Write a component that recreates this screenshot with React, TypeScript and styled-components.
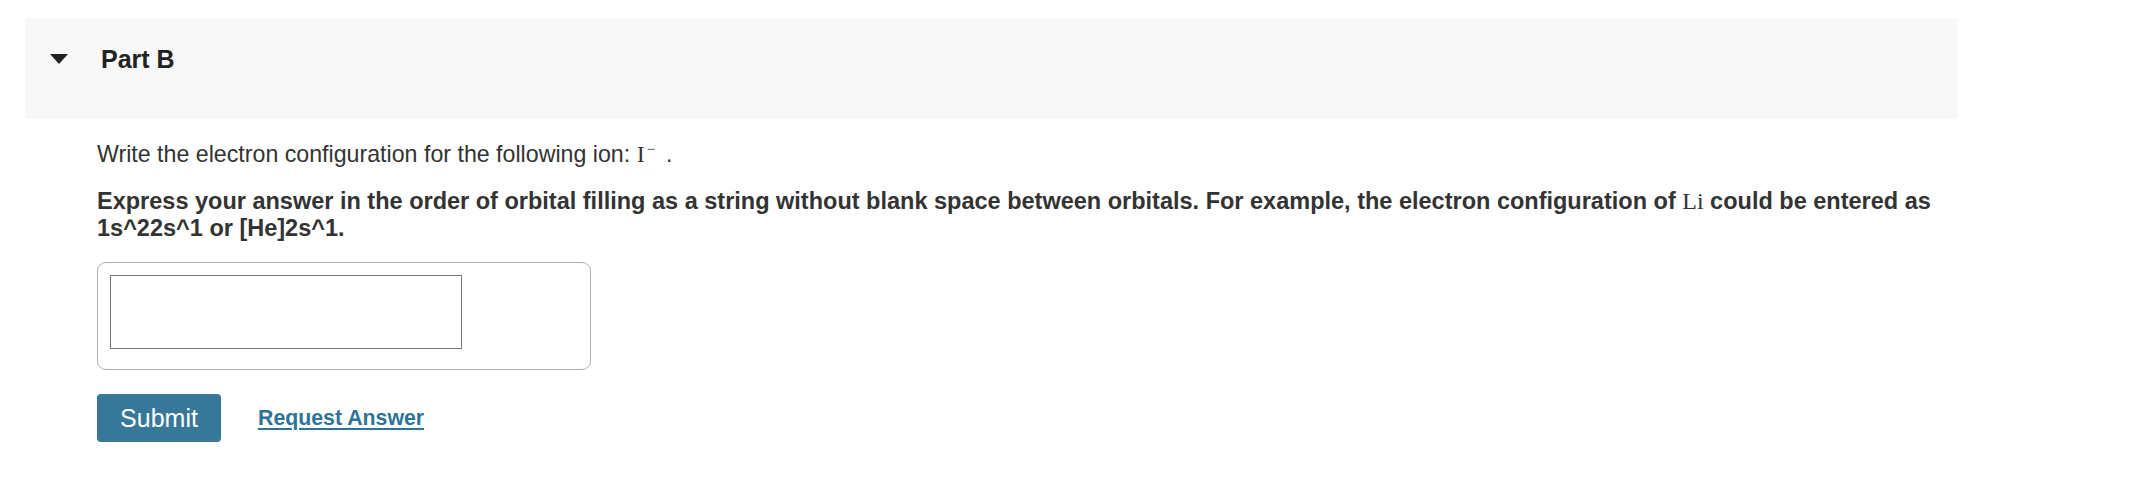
import React from "react";
import styled, { createGlobalStyle } from "styled-components";

const GlobalStyle = createGlobalStyle`
  html, body {
    margin: 0;
    padding: 0;
    background: #ffffff;
  }
  body {
    font-family: "Liberation Sans", Arial, Helvetica, sans-serif;
    color: #333333;
  }
`;

const Page = styled.div`
  padding: 18px 0 0 25px;
  width: 1933px;
`;

const PartHeader = styled.div`
  box-sizing: border-box;
  height: 101px;
  padding: 26px 25px 0;
  background: #f8f8f8;
`;

const HeaderRow = styled.div`
  display: flex;
  align-items: center;
  gap: 33px;
`;

const Caret = styled.span`
  display: block;
  width: 0;
  height: 0;
  border-left: 9.5px solid transparent;
  border-right: 9.5px solid transparent;
  border-top: 10px solid #222222;
`;

const PartTitle = styled.h2`
  margin: 0;
  font-size: 25px;
  line-height: 30px;
  font-weight: 700;
  color: #222222;
`;

const Body = styled.div`
  padding: 22px 0 0 72px;
  display: flex;
  flex-direction: column;
  align-items: flex-start;
`;

const Paragraph = styled.p<{ $bold?: boolean }>`
  margin: 0 0 20px;
  font-size: ${(p) => (p.$bold ? "23.5px" : "23.2px")};
  line-height: 27px;
  font-weight: ${(p) => (p.$bold ? 700 : 400)};
  color: #333333;
`;

const Math = styled.span`
  font-family: "Liberation Serif", "Times New Roman", serif;
  font-weight: 400;
  font-size: 24px;
  line-height: 0;
  color: #333333;
`;

const Sup = styled.span`
  font-size: 15px;
  line-height: 0;
  vertical-align: 8px;
  margin-left: 2px;
  margin-right: 11px;
`;

const AnswerBox = styled.div`
  box-sizing: border-box;
  width: 494px;
  height: 108px;
  padding: 12px;
  border: 1px solid #b0b0b0;
  border-radius: 9px;
`;

const AnswerInput = styled.input`
  box-sizing: border-box;
  display: block;
  width: 352px;
  height: 74px;
  margin: 0;
  padding: 4px 8px;
  border: 1px solid #767676;
  border-radius: 0;
  font-size: 21px;
  font-family: "Liberation Sans", Arial, sans-serif;
  outline: none;
`;

const Actions = styled.div`
  display: flex;
  align-items: center;
  gap: 37px;
  margin-top: 24px;
`;

const SubmitButton = styled.button`
  box-sizing: border-box;
  width: 124px;
  height: 48px;
  padding: 0;
  border: none;
  border-radius: 4px;
  background: #377899;
  color: #ffffff;
  font-family: "Liberation Sans", Arial, sans-serif;
  font-size: 25px;
  line-height: 48px;
  cursor: pointer;
`;

const RequestLink = styled.a`
  font-size: 21.3px;
  font-weight: 700;
  color: #2e7398;
  text-decoration: underline;
  text-underline-offset: 3px;
  cursor: pointer;
`;

export default function App() {
  return (
    <>
      <GlobalStyle />
      <Page>
        <PartHeader>
          <HeaderRow>
            <Caret />
            <PartTitle>Part B</PartTitle>
          </HeaderRow>
        </PartHeader>
        <Body>
          <Paragraph>
            Write the electron configuration for the following ion:{" "}
            <Math>
              I<Sup>−</Sup>
            </Math>
            .
          </Paragraph>
          <Paragraph $bold>
            Express your answer in the order of orbital filling as a string
            without blank space between orbitals. For example, the electron
            configuration of <Math>Li</Math> could be entered as 1s^22s^1 or
            [He]2s^1.
          </Paragraph>
          <AnswerBox>
            <AnswerInput type="text" aria-label="answer" />
          </AnswerBox>
          <Actions>
            <SubmitButton type="button">Submit</SubmitButton>
            <RequestLink>Request Answer</RequestLink>
          </Actions>
        </Body>
      </Page>
    </>
  );
}
